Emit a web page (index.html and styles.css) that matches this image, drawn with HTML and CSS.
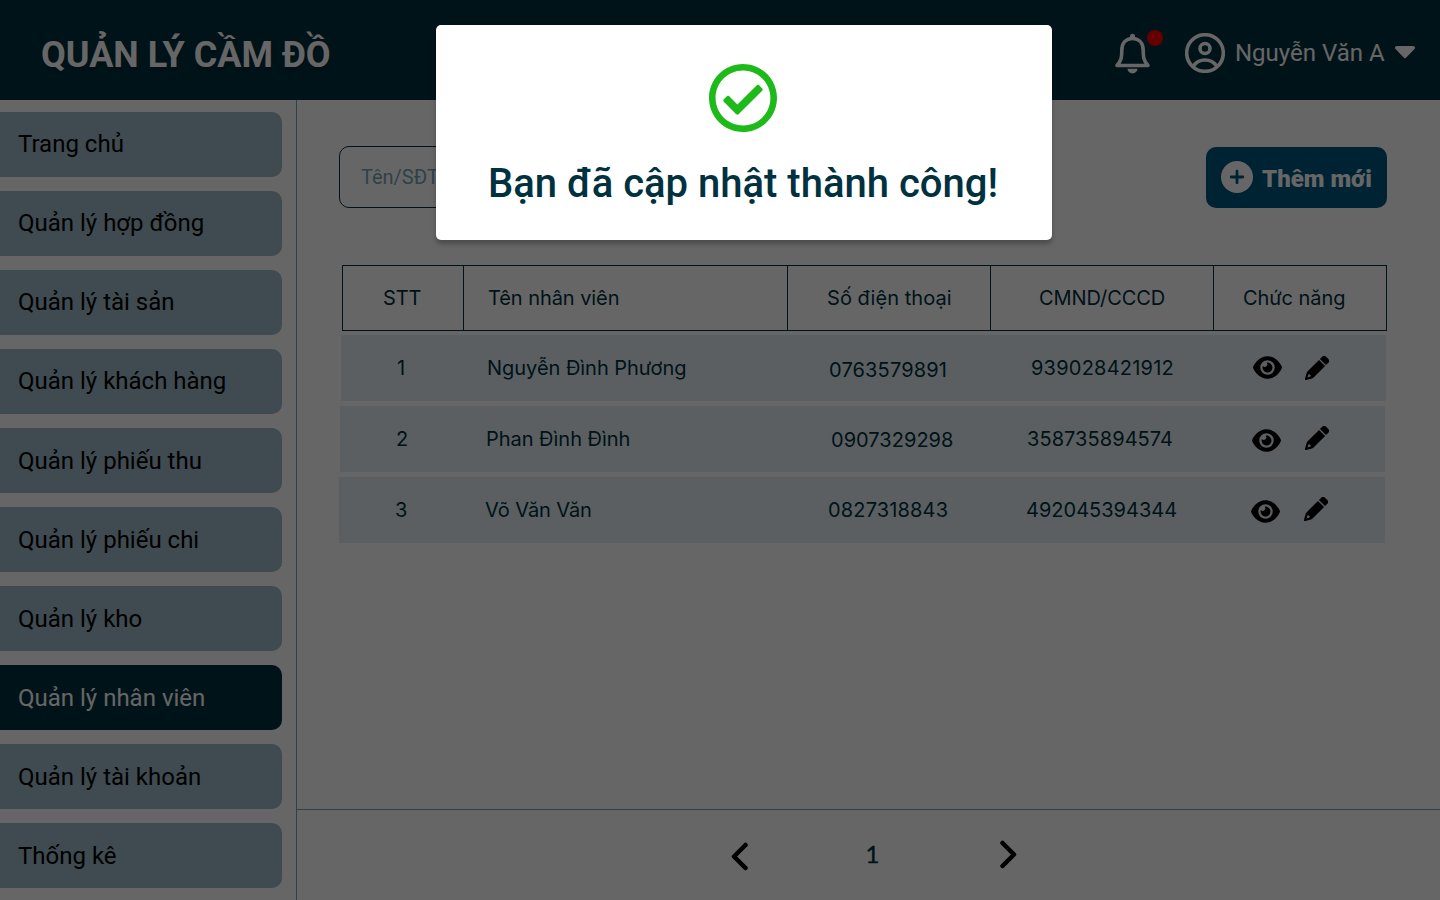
FILE: index.html
```html
<!DOCTYPE html>
<html lang="vi">
<head>
<meta charset="utf-8">
<title>Quản lý cầm đồ</title>
<link rel="stylesheet" href="styles.css">
</head>
<body>
<svg class="sprite" aria-hidden="true">
  <symbol id="eye" viewBox="0 32 576 448"><path d="M288 32c-80.8 0-145.5 36.8-192.6 80.6C48.6 156 17.3 208 2.5 243.7c-3.3 7.9-3.3 16.7 0 24.6C17.3 304 48.6 356 95.4 399.4C142.5 443.2 207.2 480 288 480s145.5-36.8 192.6-80.6c46.8-43.5 78.1-95.4 93-131.1c3.3-7.9 3.3-16.7 0-24.6c-14.9-35.7-46.2-87.7-93-131.1C433.5 68.8 368.8 32 288 32zM144 256a144 144 0 1 1 288 0 144 144 0 1 1-288 0zM270 160a48 48 0 0 1-75 68a98 98 0 1 0 75-68z"/></symbol>
  <symbol id="pencil" viewBox="0 0 24 24"><path fill-rule="evenodd" d="M14.900 3L17 .9a3.100 3.100 0 0 1 4.300 0L23.100 2.700a3.100 3.100 0 0 1 0 4.300L21 9.100zM14 3.900L20.100 10L8.800 21.300Q8 22.100 7 22.400L1.200 24Q-.2 24.200 0 22.800L1.600 17Q1.900 16 2.700 15.200zM3.400 18.600L2.600 21.400L5.400 20.600L6.100 19.300L4.700 19.300V17.900Z"/></symbol>
</svg>

<header class="topbar">
  <h1 class="brand">QUẢN LÝ CẦM ĐỒ</h1>
  <div class="account">
    <div class="bell">
      <svg width="36" height="42" viewBox="0 0 36 42"><path class="line" d="M2 32.500C6.500 27.500 6.800 24 6.800 17.500C6.800 10 11 5.500 17.500 5.500S28.200 10 28.200 17.500C28.200 24 28.500 27.500 33 32.500Z"/><path class="fill" d="M15 5V3.300a2.500 2.500 0 0 1 5 0V5zM12.500 35.800h10a5 4.700 0 0 1-10 0z"/></svg>
      <span class="dot"></span>
    </div>
    <svg class="avatar" width="40" height="40" viewBox="0 0 40 40"><circle class="line" cx="20" cy="20" r="18.300"/><circle class="line" cx="20" cy="15.500" r="5"/><path class="line" d="M8.500 33c2.500-4 6.500-6 11.500-6s9 2 11.500 6"/></svg>
    <span class="user">Nguyễn Văn A</span>
    <svg class="caret" width="20" height="13" viewBox="0 0 20 13"><path class="fill" d="M1.800 0h16.400c1.600 0 2.400 1.900 1.300 3l-8.200 8.500a1.800 1.800 0 0 1-2.600 0L.5 3C-.6 1.900.2 0 1.800 0z"/></svg>
  </div>
</header>

<div class="body">
  <nav class="sidebar">
    <a class="item">Trang chủ</a>
    <a class="item">Quản lý hợp đồng</a>
    <a class="item">Quản lý tài sản</a>
    <a class="item">Quản lý khách hàng</a>
    <a class="item low">Quản lý phiếu thu</a>
    <a class="item low">Quản lý phiếu chi</a>
    <a class="item low">Quản lý kho</a>
    <a class="item low active">Quản lý nhân viên</a>
    <a class="item low">Quản lý tài khoản</a>
    <a class="item low">Thống kê</a>
  </nav>
  <main class="main">
    <div class="content">
      <div class="tools">
        <div class="search">Tên/SĐT</div>
        <button class="add">
          <svg width="32" height="32" viewBox="0 0 32 32"><circle cx="16" cy="16" r="16" fill="#fff"/><path d="M16 10.200v11.600M10.200 16h11.600" stroke="#005880" stroke-width="2.800" stroke-linecap="round"/></svg>
          <span>Thêm mới</span>
        </button>
      </div>
      <div class="table">
        <div class="thead">
          <div class="th c1">STT</div><div class="th c2">Tên nhân viên</div><div class="th c3">Số điện thoại</div><div class="th c4">CMND/CCCD</div><div class="th c5">Chức năng</div>
        </div>
        <div class="row r1">
          <div class="num">1</div><div class="name">Nguyễn Đình Phương</div><div class="phone">0763579891</div><div class="idno">939028421912</div>
          <div class="actions"><svg class="eye"><use href="#eye"/></svg><svg class="pencil"><use href="#pencil"/></svg></div>
        </div>
        <div class="row r2">
          <div class="num">2</div><div class="name">Phan Đình Đình</div><div class="phone">0907329298</div><div class="idno">358735894574</div>
          <div class="actions"><svg class="eye"><use href="#eye"/></svg><svg class="pencil"><use href="#pencil"/></svg></div>
        </div>
        <div class="row r3">
          <div class="num">3</div><div class="name">Võ Văn Văn</div><div class="phone">0827318843</div><div class="idno">492045394344</div>
          <div class="actions"><svg class="eye"><use href="#eye"/></svg><svg class="pencil"><use href="#pencil"/></svg></div>
        </div>
      </div>
    </div>
    <footer class="pager">
      <svg class="prev" width="18" height="29" viewBox="0 0 18 29"><path d="M14.500 3L3 14.500L14.500 26"/></svg>
      <span class="page">1</span>
      <svg class="next" width="18" height="29" viewBox="0 0 18 29"><path d="M3.500 3L15 14.500L3.500 26"/></svg>
    </footer>
  </main>
</div>

<div class="overlay">
  <div class="modal">
    <svg width="68" height="68" viewBox="8 8 496 496"><path fill="#1dba1a" d="M256 8C119.033 8 8 119.033 8 256s111.033 248 248 248 248-111.033 248-248S392.967 8 256 8zm0 48c110.532 0 200 89.451 200 200 0 110.532-89.451 200-200 200-110.532 0-200-89.451-200-200 0-110.532 89.451-200 200-200m140.204 130.267l-22.536-22.718c-4.667-4.705-12.265-4.736-16.970-.068L215.346 303.697l-59.792-60.277c-4.667-4.705-12.265-4.736-16.970-.069l-22.719 22.536c-4.705 4.667-4.736 12.265-.068 16.971l90.781 91.516c4.667 4.705 12.265 4.736 16.970.068l172.589-171.204c4.704-4.668 4.734-12.266.067-16.971z"/></svg>
    <p class="message">Bạn đã cập nhật thành công!</p>
  </div>
</div>
</body>
</html>
```

FILE: styles.css
```css
* { box-sizing: border-box; }
body {
  margin: 0;
  width: 1440px;
  height: 900px;
  overflow: hidden;
  display: flex;
  flex-direction: column;
  background: #fff;
  font-family: Roboto, sans-serif;
}
.sprite { display: none; }
svg { display: block; flex: none; }
.line { fill: none; stroke: #fff; stroke-width: 3.6; stroke-linejoin: round; }
.fill { fill: #fff; }

.topbar {
  flex: none;
  height: 100px;
  padding: 0 25px 0 41px;
  display: flex;
  justify-content: space-between;
  background: #00313f;
  color: #fff;
}
.brand {
  margin: 0;
  padding-top: 34px;
  font-size: 36px;
  line-height: 42px;
  font-weight: 700;
  text-shadow: 0 3px 3px rgba(0, 0, 0, .22);
  white-space: nowrap;
}
.account { display: flex; align-items: flex-start; }
.bell { position: relative; margin: 33px 34px 0 0; }
.dot {
  position: absolute;
  left: 32px;
  top: -3px;
  width: 16px;
  height: 16px;
  border-radius: 50%;
  background: #f90000;
}
.avatar { margin-top: 33px; }
.user { margin: 39px 10.400px 0 10px; font-size: 24px; line-height: 28px; white-space: nowrap; }
.caret { margin-top: 46px; }

.body { flex: 1; display: flex; min-height: 0; }
.sidebar {
  flex: none;
  width: 297px;
  padding: 12px 14px 0 0;
  border-right: 1px solid #7ba3b5;
  display: flex;
  flex-direction: column;
  gap: 14px;
}
.item {
  flex: none;
  height: 65px;
  padding-left: 18px;
  border-radius: 0 10px 10px 0;
  background: #9ebbc7;
  color: #000;
  font-size: 24px;
  line-height: 64px;
}
.item.low { line-height: 66px; }
.item.active { background: #00313f; color: #fff; }

.main { flex: 1; display: flex; flex-direction: column; }
.content { flex: 1; padding: 46px 53px 0 42px; }
.tools { display: flex; justify-content: space-between; }
.search {
  width: 480px;
  height: 62px;
  padding-left: 21px;
  border: 1px solid #00313f;
  border-radius: 10px;
  color: #7ba3b5;
  font-size: 20px;
  line-height: 61px;
}
.add {
  width: 181px;
  height: 61px;
  margin-top: 1px;
  padding: 0 0 0 15px;
  border: 0;
  border-radius: 10px;
  display: flex;
  align-items: center;
  gap: 9px;
  background: #005880;
  color: #fff;
  font: 900 24px Roboto, sans-serif;
  white-space: nowrap;
}
.add svg { margin-bottom: 1px; }
.add span { padding-top: 2px; }
.table {
  margin-top: 57px;
  color: #00313f;
  font-family: Inter, sans-serif;
  font-size: 20px;
  font-weight: 400;
  line-height: 24px;
}
.thead { width: 1045px; height: 66px; margin: 0 0 4px 3px; display: flex; border: 1px solid #00313f; letter-spacing: -.07px; }
.th { padding-top: 20px; border-right: 1px solid #00313f; white-space: nowrap; }
.th:last-child { border-right: 0; }
.c1 { width: 121px; padding-left: 40px; }
.c2 { width: 324px; padding-left: 24px; }
.c3 { width: 203px; padding-left: 39px; letter-spacing: .05px; }
.c4 { width: 223px; padding-left: 48px; }
.c5 { flex: 1; padding-left: 29px; }

.row { height: 66px; margin-bottom: 5px; display: flex; background: #e3edf3; white-space: nowrap; }
.num { width: 146px; padding: 21px 0 0 56px; }
.name { width: 342px; padding-top: 21px; letter-spacing: -.03px; }
.phone { width: 202px; padding-top: 23px; letter-spacing: .15px; }
.idno { width: 222px; padding-top: 21px; letter-spacing: .22px; }
.actions { display: flex; gap: 23px; }
.eye { width: 29px; height: 23px; margin-top: 21px; }
.pencil { width: 24px; height: 24px; margin-top: 21px; }
.r1 { width: 1045px; margin-left: 2px; }
.r2 { width: 1045px; margin-left: 1px; }
.r2 .name { width: 345px; }
.r2 .phone { width: 196px; padding-top: 22px; letter-spacing: .03px; }
.r2 .idno { width: 225px; letter-spacing: .06px; }
.r2 .eye { margin-top: 23px; }
.r2 .pencil { margin-top: 20px; }
.r2 .actions { gap: 24px; }
.r3 { width: 1046px; margin-left: 0; }
.r3 .name { width: 343px; letter-spacing: -.1px; }
.r3 .phone { width: 198px; padding-top: 21px; }
.r3 .idno { width: 225px; letter-spacing: 0; }
.r3 .eye { margin-top: 23px; }
.r3 .pencil { margin-top: 20px; }
.r3 .actions { gap: 24px; }

.pager {
  flex: none;
  height: 91px;
  padding: 0 423px 0 434px;
  border-top: 1px solid #7ba3b5;
  display: flex;
  justify-content: space-between;
}
.pager path { fill: none; stroke: #000; stroke-width: 4.5; stroke-linecap: round; stroke-linejoin: round; }
.prev { margin-top: 32px; }
.next { margin-top: 30px; }
.page {
  margin-right: 3px;
  padding-top: 29px;
  color: #00313f;
  font: 400 24px/29px Lato, sans-serif;
  -webkit-text-stroke: .4px #00313f;
}

.overlay {
  position: absolute;
  left: 0;
  top: 0;
  width: 1440px;
  height: 900px;
  padding: 25px 0 0 436px;
  background: rgba(0, 0, 0, .6);
}
.modal {
  width: 616px;
  height: 215px;
  padding: 39px 2px 0 0;
  border-radius: 5px;
  display: flex;
  flex-direction: column;
  align-items: center;
  background: #fff;
  box-shadow: 0 4px 4px rgba(0, 0, 0, .25);
}
.message {
  margin: 28px 0 0;
  color: #00313f;
  font-size: 40px;
  line-height: 47px;
  font-weight: 500;
  white-space: nowrap;
}
```
